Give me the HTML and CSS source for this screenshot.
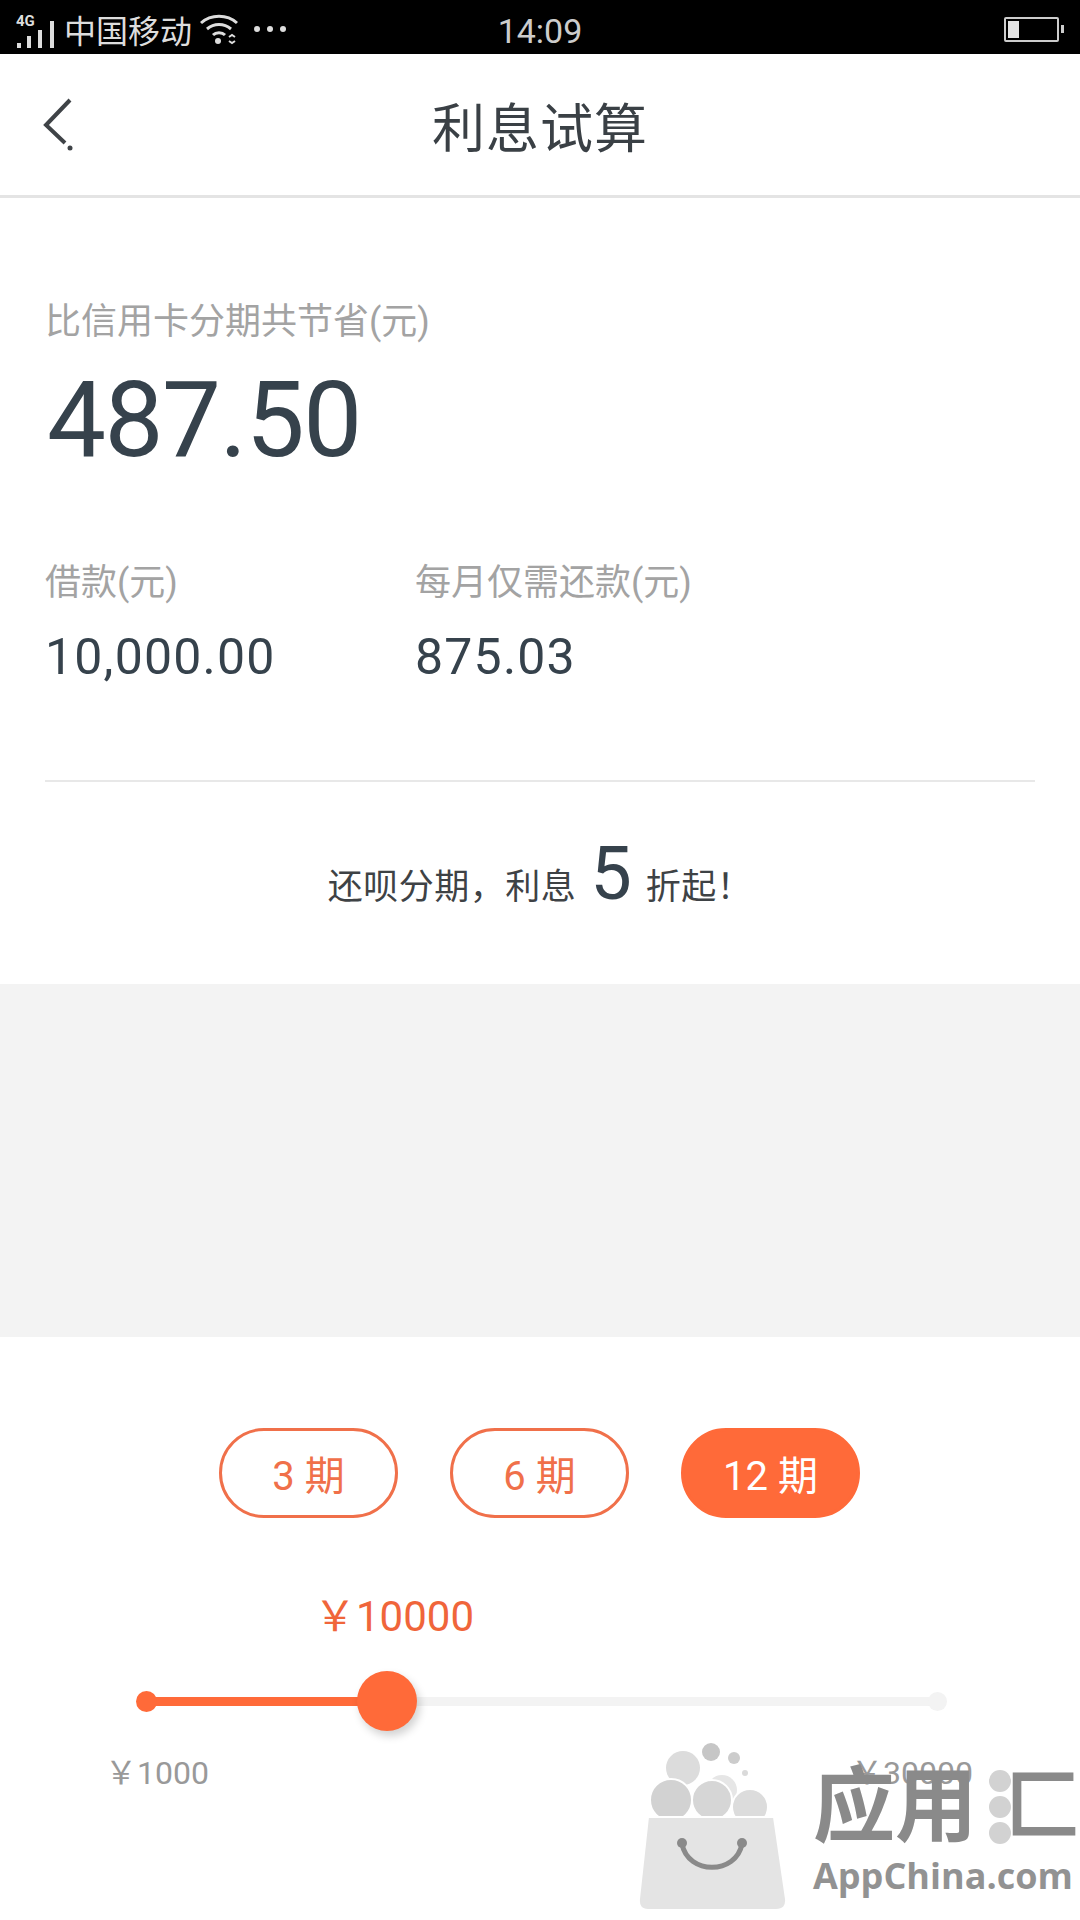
FILE: index.html
```html
<!DOCTYPE html>
<html lang="zh-CN">
<head>
  <meta charset="UTF-8">
  <meta name="viewport" content="width=device-width, initial-scale=1.0">
  <title>利息试算</title>
  <link rel="stylesheet" href="styles.css">
</head>
<body>

  <!-- Status bar -->
  <div class="status-bar">
    <div class="status-left">
      <svg class="signal" width="38" height="42" viewBox="0 0 38 42">
        <text x="0" y="18" class="signal-text">4G</text>
        <rect x="1" y="35" width="4" height="5" fill="#ddd"/>
        <rect x="11" y="28" width="4" height="12" fill="#ddd"/>
        <rect x="22" y="22" width="4" height="18" fill="#ddd"/>
        <rect x="34" y="13" width="4" height="27" fill="#ddd"/>
      </svg>
      <span class="carrier">中国移动</span>
      <svg class="wifi" width="38" height="32" viewBox="0 0 38 32" fill="none" stroke="#ddd" stroke-width="3">
        <path d="M1 10C11 1 27 1 37 10"/>
        <path d="M7 16C14 10 24 10 31 16"/>
        <path d="M13 22C16 19 22 19 25 22"/>
        <circle cx="18" cy="28" r="3" fill="#ddd" stroke="none"/>
        <path d="M29 24l3-2 3 2M29 28l3 2 3-2" stroke-width="2"/>
      </svg>
      <div class="status-dots"><i></i><i></i><i></i></div>
    </div>
    <div class="status-time">14:09</div>
    <div class="status-right">
      <div class="battery"><div class="battery-level"></div></div>
      <div class="battery-tip"></div>
    </div>
  </div>

  <!-- Title bar -->
  <div class="nav">
    <svg class="back" width="32" height="56" viewBox="0 0 32 56" fill="none" stroke="#3f4347" stroke-width="4">
      <path d="M27 2L3 27L22 45"/>
      <circle cx="27" cy="50" r="2.5" fill="#3f4347" stroke="none"/>
    </svg>
    <div class="nav-title">利息试算</div>
  </div>

  <!-- Result summary -->
  <div class="summary">
    <div class="label">比信用卡分期共节省(元)</div>
    <div class="saving">487.50</div>
    <div class="figures">
      <div class="figure">
        <div class="label">借款(元)</div>
        <div class="figure-value">10,000.00</div>
      </div>
      <div class="figure">
        <div class="label">每月仅需还款(元)</div>
        <div class="figure-value">875.03</div>
      </div>
    </div>
    <div class="divider"></div>
    <div class="promo">还呗分期，利息<span class="promo-num">5</span>折起！</div>
  </div>

  <div class="band"></div>

  <!-- Period pills -->
  <div class="periods">
    <div class="pill">3 期</div>
    <div class="pill">6 期</div>
    <div class="pill pill-active">12 期</div>
  </div>

  <!-- Amount slider -->
  <div class="amount">
    <div class="amount-value">￥10000</div>
    <div class="slider">
      <div class="slider-fill"></div>
      <div class="slider-start"></div>
      <div class="slider-end"></div>
      <div class="slider-thumb"></div>
    </div>
    <div class="amount-limits">
      <span>￥1000</span>
      <span>￥30000</span>
    </div>
  </div>

  <!-- Watermark over the page -->
  <div class="watermark">
    <svg class="wm-bag" width="150" height="170" viewBox="0 0 150 170">
      <circle cx="45" cy="27" r="17" fill="#dcdcdc"/>
      <circle cx="84" cy="49" r="15" fill="#e6e6e6"/>
      <circle cx="73" cy="11" r="9" fill="#c6c6c6"/>
      <circle cx="96" cy="17" r="6" fill="#cccccc"/>
      <circle cx="107" cy="32" r="3" fill="#dadada"/>
      <circle cx="33" cy="59" r="21" fill="#d2d2d2" stroke="#fff" stroke-width="2"/>
      <circle cx="112" cy="66" r="18" fill="#dcdcdc" stroke="#fff" stroke-width="2"/>
      <circle cx="74" cy="59" r="20" fill="#d6d6d6" stroke="#fff" stroke-width="2"/>
      <path d="M10 76H136L148 158Q149 169 138 169H10Q0 169 1 158Z" fill="#e4e4e4" stroke="#fff" stroke-width="2"/>
      <path d="M44 103C50 134 98 134 104 103" fill="none" stroke="#8a8a8a" stroke-width="5"/>
      <circle cx="44" cy="102" r="5" fill="#8a8a8a"/>
      <circle cx="104" cy="102" r="5" fill="#8a8a8a"/>
    </svg>
    <div class="wm-text">
      <div class="wm-name">
        <span>应用</span>
        <div class="wm-dots"><i></i><i></i><i></i></div>
        <span class="wm-last">匚</span>
      </div>
      <div class="wm-domain">AppChina.com</div>
    </div>
  </div>

</body>
</html>
```

FILE: styles.css
```css
body {
  margin: 0;
  width: 1080px;
  height: 1920px;
  position: relative;
  overflow: hidden;
  background-color: #fff;
  font-family: Roboto, "Noto Sans CJK SC", sans-serif;
}

/* Status bar */
.status-bar {
  height: 54px;
  background-color: #000;
  color: #ddd;
  display: grid;
  grid-template-columns: 1fr auto 1fr;
  align-items: center;
  padding: 0 16px;
}

.status-left {
  display: flex;
  align-items: center;
}

.signal {
  overflow: visible;
}

.signal-text {
  font-size: 15px;
  font-weight: 700;
  fill: #ddd;
}

.carrier {
  font-size: 32px;
  margin-left: 10px;
}

.wifi {
  margin-left: 8px;
}

.status-dots {
  display: flex;
  gap: 7px;
  margin-left: 16px;
}

.status-dots i {
  width: 6px;
  height: 6px;
  border-radius: 50%;
  background-color: #ddd;
}

.status-time {
  font-size: 34px;
  line-height: 54px;
  padding-top: 4px;
  color: #ccc;
}

.status-right {
  display: flex;
  align-items: center;
  justify-content: flex-end;
}

.battery {
  width: 55px;
  height: 25px;
  box-sizing: border-box;
  border: 2px solid #ccc;
  border-radius: 2px;
  padding: 2px;
}

.battery-level {
  width: 11px;
  height: 100%;
  background-color: #e4e4e4;
}

.battery-tip {
  width: 3px;
  height: 8px;
  background-color: #ccc;
  margin-left: 2px;
}

/* Title bar */
.nav {
  height: 141px;
  border-bottom: 3px solid #e4e4e4;
  position: relative;
  display: flex;
  align-items: center;
  justify-content: center;
}

.back {
  position: absolute;
  left: 43px;
  top: 44px;
}

.nav-title {
  font-size: 53px;
  letter-spacing: 1px;
  color: #3a4045;
}

/* Summary */
.summary {
  padding: 100px 45px 0;
}

.label {
  font-size: 36px;
  line-height: 48px;
  color: #a3a3a3;
}

.saving {
  font-size: 105px;
  line-height: 120px;
  margin-top: 15px;
  margin-left: 2px;
  letter-spacing: -1.5px;
  color: #36424c;
}

.figures {
  display: flex;
  margin-top: 78px;
}

.figure {
  width: 370px;
}

.figure-value {
  font-size: 50px;
  line-height: 60px;
  margin-top: 20px;
  letter-spacing: 1.2px;
  color: #36424c;
}

.divider {
  height: 2px;
  background-color: #e8e8e8;
  margin-top: 93px;
}

.promo {
  height: 202px;
  box-sizing: border-box;
  padding-top: 54px;
  display: flex;
  justify-content: center;
  align-items: baseline;
  font-size: 35px;
  letter-spacing: 0.5px;
  color: #3e4245;
}

.promo-num {
  font-size: 74px;
  line-height: 76px;
  margin: 0 14px;
  letter-spacing: 0;
  color: #36424c;
}

.band {
  height: 353px;
  background-color: #f3f3f3;
}

/* Period pills */
.periods {
  display: flex;
  justify-content: center;
  gap: 52px;
  margin-top: 91px;
  margin-right: 1px;
}

.pill {
  width: 179px;
  height: 90px;
  box-sizing: border-box;
  border: 3px solid #f0704a;
  border-radius: 45px;
  display: flex;
  align-items: center;
  justify-content: center;
  font-size: 40px;
  color: #f0704a;
}

.pill-active {
  background-color: #ff6a39;
  border-color: #ff6a39;
  color: #fff;
}

/* Amount slider */
.amount {
  margin-top: 74px;
  padding-left: 105px;
  width: 868px;
}

.amount-value {
  font-size: 42px;
  line-height: 50px;
  color: #f0653a;
  margin-left: 209px;
}

.slider {
  height: 9px;
  margin: 55px 36px 0 41px;
  border-radius: 5px;
  background-color: #f3f3f3;
  position: relative;
}

.slider-fill {
  width: 241px;
  height: 100%;
  background-color: #ff6a39;
}

.slider-start, .slider-end, .slider-thumb {
  position: absolute;
  border-radius: 50%;
}

.slider-start {
  left: -10px;
  top: -6px;
  width: 21px;
  height: 21px;
  background-color: #ff6a39;
}

.slider-end {
  right: -10px;
  top: -5px;
  width: 19px;
  height: 19px;
  background-color: #f3f3f3;
}

.slider-thumb {
  left: 211px;
  top: -26px;
  width: 60px;
  height: 60px;
  background-color: #ff6a39;
  box-shadow: 3px 5px 8px rgba(0, 0, 0, 0.18);
}

.amount-limits {
  display: flex;
  justify-content: space-between;
  margin-top: 47px;
  font-size: 32px;
  line-height: 40px;
  color: #999;
}

/* Watermark */
.watermark {
  position: absolute;
  left: 638px;
  top: 1741px;
  display: flex;
  gap: 25px;
}

.wm-text {
  margin-top: 26px;
  color: #8a8a8a;
}

.wm-name {
  display: flex;
  align-items: center;
  height: 80px;
  margin-bottom: 8px;
  font-size: 82px;
  font-weight: 700;
  line-height: 80px;
  white-space: nowrap;
}

.wm-dots {
  display: flex;
  flex-direction: column;
  gap: 4px;
  margin-left: 12px;
}

.wm-dots i {
  width: 22px;
  height: 22px;
  border-radius: 50%;
  background-color: #d2d2d2;
}

.wm-last {
  font-size: 76px;
  margin-left: -6px;
}

.wm-domain {
  font-family: "Open Sans", sans-serif;
  font-size: 36px;
  font-weight: 700;
  line-height: 42px;
  color: #929292;
  white-space: nowrap;
}
```
